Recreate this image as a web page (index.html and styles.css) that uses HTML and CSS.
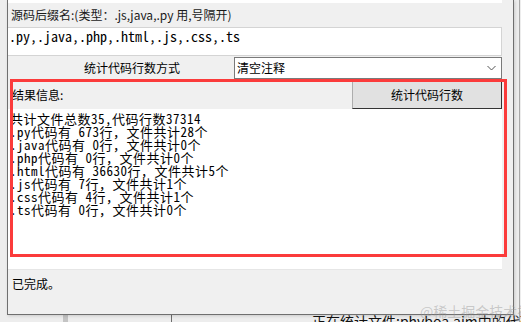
FILE: index.html
```html
<!DOCTYPE html>
<html lang="zh-CN">
<head>
  <meta charset="UTF-8">
  <title>统计代码行数</title>
  <link rel="stylesheet" href="styles.css">
</head>
<body>

  <!-- 后面的窗口 -->
  <div class="back-bar"></div>
  <div class="back-line"></div>
  <div class="back-right"></div>
  <div class="back-text">正在统计文件:phvboa.aim中的代码行数</div>

  <!-- 对话框 -->
  <div class="dialog">
    <div class="top-strip"></div>
    <div class="label-row">源码后缀名:(类型：.js,java,.py 用,号隔开)</div>
    <div class="input">.py,.java,.php,.html,.js,.css,.ts</div>

    <div class="mode-row">
      <div class="mode-label">统计代码行数方式</div>
      <div class="combo">
        <span>清空注释</span>
        <svg class="chevron" width="9" height="6" viewBox="0 0 9 6">
          <path d="M0.5 1 L4.5 5 L8.5 1" fill="none" stroke="#555" stroke-width="1"/>
        </svg>
      </div>
    </div>

    <div class="result-head">
      <span class="result-title">结果信息:</span>
      <button class="btn">统计代码行数</button>
    </div>

    <div class="result">共计文件总数35,代码行数37314
.py代码有 673行，文件共计28个
.java代码有 0行，文件共计0个
.php代码有 0行，文件共计0个
.html代码有 36630行，文件共计5个
.js代码有 7行，文件共计1个
.css代码有 4行，文件共计1个
.ts代码有 0行，文件共计0个</div>

    <div class="status">已完成。</div>

    <!-- 红框标注 -->
    <div class="mark"></div>
  </div>

  <div class="watermark">@稀土掘金技术社区</div>

</body>
</html>
```

FILE: styles.css
```css
html, body {
  margin: 0;
  padding: 0;
  height: 100%;
  overflow: hidden;
}

body {
  position: relative;
  background: #ededed;
  font-family: "Noto Sans CJK SC", sans-serif;
  font-size: 12px;
  color: #000;
}

/* 后面窗口的残影 */
.back-bar {
  position: absolute;
  left: 63px;
  top: 300px;
  width: 5px;
  height: 22px;
  background: #c4c4c4;
}

.back-line {
  position: absolute;
  left: 171px;
  top: 300px;
  width: 1px;
  height: 22px;
  background: #6e6e6e;
}

.back-right {
  position: absolute;
  left: 519px;
  top: 0;
  width: 1px;
  height: 322px;
  background: #a8a8a8;
}

.back-text {
  position: absolute;
  left: 312px;
  top: 311px;
  font-size: 14px;
  line-height: 20px;
  white-space: nowrap;
  color: #111;
}

/* 对话框 */
.dialog {
  position: relative;
  z-index: 2;
  margin-left: 7px;
  width: 494px;
  height: 314px;
  padding-right: 11px;
  background: #f0f0f0;
  border: 1px solid #6f6f6f;
  border-top: none;
  box-shadow: 1px 1px 3px rgba(0, 0, 0, 0.15);
}

.top-strip {
  height: 3px;
  background: #fff;
}

.label-row {
  height: 24px;
  line-height: 24px;
  padding-left: 3px;
  color: #1a1a1a;
}

.input {
  height: 27px;
  background: #fff;
  border: 1px solid #d4d4d4;
  border-left: none;
  font-family: "Noto Sans Mono CJK SC", "Noto Sans CJK SC", monospace;
  font-size: 14px;
  line-height: 17px;
  padding-left: 1px;
  white-space: pre;
}

.mode-row {
  display: flex;
  margin-top: 1px;
  height: 22px;
}

.mode-label {
  width: 226px;
  padding-left: 76px;
  box-sizing: border-box;
  line-height: 22px;
}

.combo {
  flex: 1;
  display: flex;
  align-items: center;
  justify-content: space-between;
  background: #fff;
  border: 1px solid #7a7a7a;
  padding: 0 5px 0 2px;
  line-height: 20px;
}

.chevron {
  display: block;
}

.result-head {
  display: flex;
  justify-content: space-between;
  align-items: center;
  height: 30px;
}

.result-title {
  padding-left: 4px;
}

.btn {
  width: 150px;
  height: 30px;
  margin: 0;
  padding: 0;
  font-family: inherit;
  font-size: 12px;
  color: #000;
  background: #e1e1e1;
  border: 1px solid #adadad;
  border-right-color: #333;
  border-bottom-color: #333;
}

.result {
  height: 157px;
  padding-top: 3px;
  padding-left: 2px;
  background: #fff;
  font-family: "Noto Sans Mono CJK SC", "Noto Sans CJK SC", monospace;
  font-size: 13px;
  letter-spacing: 0.5px;
  line-height: 13px;
  white-space: pre;
  border-bottom: 1px solid #e6e6e6;
}

.status {
  padding-left: 4px;
  padding-top: 6px;
  line-height: 16px;
}

/* 红框 */
.mark {
  position: absolute;
  left: 2px;
  top: 79px;
  width: 491px;
  height: 172px;
  border: 3px solid #fb3b3b;
  pointer-events: none;
}

.watermark {
  position: absolute;
  z-index: 3;
  left: 420px;
  top: 302px;
  font-size: 14px;
  line-height: 18px;
  white-space: nowrap;
  color: rgba(150, 150, 150, 0.45);
}
```
